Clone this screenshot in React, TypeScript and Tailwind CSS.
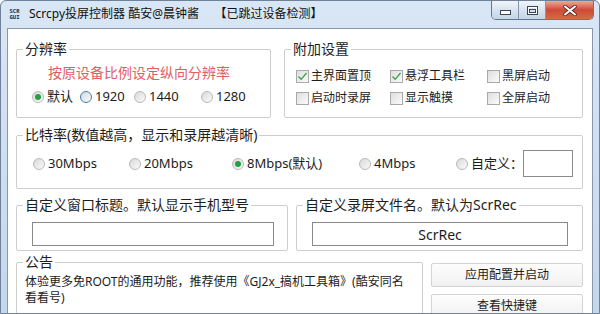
import React from "react";

function Radio({ label, checked, hover, className }: { label: string; checked?: boolean; hover?: boolean; className?: string }) {
  return (
    <div className={`flex items-center gap-[3px] ${className ?? ""}`}>
      <span
        className={`w-[12px] h-[12px] shrink-0 rounded-full border flex items-center justify-center bg-linear-to-br from-[#d9d9d9] to-[#fbfbfb] ${
          hover ? "border-[#3d7fb5]" : "border-[#b9b9b9]"
        }`}
      >
        {checked && <span className="w-[6px] h-[6px] rounded-full bg-[#24a043]" />}
      </span>
      <span className="whitespace-nowrap">{label}</span>
    </div>
  );
}

function Check({ label, checked, className }: { label: string; checked?: boolean; className?: string }) {
  return (
    <div className={`flex items-center gap-[2px] ${className ?? ""}`}>
      <span className="w-[13px] h-[13px] shrink-0 border border-[#a9a9a9] bg-linear-to-br from-[#dedede] to-[#fbfbfb] flex items-center justify-center">
        {checked && (
          <svg width="11" height="11" viewBox="0 0 11 11">
            <path d="M1.5 5.5 L4.2 8.3 L9.5 2" fill="none" stroke="#3aa04a" strokeWidth="1.3" />
          </svg>
        )}
      </span>
      <span className="whitespace-nowrap">{label}</span>
    </div>
  );
}

function Legend({ children }: { children: React.ReactNode }) {
  return <legend className="ml-[6px] px-[2px] text-[14px] leading-[18px] text-[#1e1e1e]">{children}</legend>;
}

export default function App() {
  return (
    <div className="w-[600px] h-[314px] overflow-hidden flex flex-col border border-[#6f8299] rounded-t-[6px] bg-linear-to-b from-[#d9e6f5] to-[#c3d7ed] text-[#1c1c1c] font-['Noto_Sans','Noto_Sans_CJK_SC',sans-serif]">
      {/* title bar */}
      <div className="h-[27px] shrink-0 flex">
        <div className="flex items-center pl-[7px] h-[22px] mt-[2px]">
          <div className="w-[13px] flex flex-col items-center font-['DejaVu_Sans_Mono',monospace] font-bold text-[5.5px] leading-[6px] text-[#1b2a3a]">
            <span>SCR</span>
            <span>GUI</span>
          </div>
          <span className="ml-[8px] text-[12px] leading-[16px] whitespace-pre text-[#111]">
            Scrcpy投屏控制器 酷安@晨钟酱     【已跳过设备检测】
          </span>
        </div>
        <div className="ml-auto mr-[5px] self-start flex h-[19px] rounded-b-[5px] border border-t-0 border-[#64778e] overflow-hidden">
          <div className="w-[27px] border-r border-[#8596ab] bg-linear-to-b from-[#f1f5fa] via-[#d9e3ef] to-[#c5d4e6] flex items-end justify-center pb-[4px]">
            <svg width="11" height="5" viewBox="0 0 11 5">
              <rect x="0.5" y="0.5" width="10" height="4" fill="#fff" stroke="#3b4656" />
            </svg>
          </div>
          <div className="w-[27px] border-r border-[#8596ab] bg-linear-to-b from-[#f1f5fa] via-[#d9e3ef] to-[#c5d4e6] flex items-center justify-center">
            <svg width="11" height="9" viewBox="0 0 11 9">
              <rect x="0.5" y="0.5" width="10" height="8" fill="none" stroke="#3b4656" />
              <rect x="1.5" y="1.5" width="8" height="6" fill="none" stroke="#fff" />
              <rect x="2.5" y="3.5" width="6" height="3" fill="none" stroke="#3b4656" />
            </svg>
          </div>
          <div className="w-[47px] bg-linear-to-b from-[#eaa999] via-[#cb4a33] to-[#d66b4b] flex items-center justify-center">
            <svg width="14" height="11" viewBox="0 0 14 11">
              <path d="M2 1.5 L12 9.5 M12 1.5 L2 9.5" stroke="#5a2a22" strokeWidth="3.6" strokeLinecap="round" />
              <path d="M2 1.5 L12 9.5 M12 1.5 L2 9.5" stroke="#fff" strokeWidth="2" strokeLinecap="round" />
            </svg>
          </div>
        </div>
      </div>

      {/* client area */}
      <div className="flex-1 mx-[6px] border border-[#8797ac] bg-white pl-[8px] pr-[9px] pt-[11px] flex flex-col">
        {/* row 1 */}
        <div className="flex gap-[13px]">
          <fieldset className="w-[255px] h-[78px] border border-[#cdcdcd] rounded-[2px]">
            <Legend>分辨率</Legend>
            <div className="pl-[15px]">
              <div className="mt-[5px] pl-[16px] text-[14px] leading-[20px] text-[#e0605f]">按原设备比例设定纵向分辨率</div>
              <div className="mt-[4px] h-[20px] flex text-[13px]">
                <Radio label="默认" checked className="w-[48px]" />
                <Radio label="1920" hover className="w-[54px]" />
                <Radio label="1440" className="w-[67px]" />
                <Radio label="1280" />
              </div>
            </div>
          </fieldset>
          <fieldset className="flex-1 h-[78px] border border-[#cdcdcd] rounded-[2px]">
            <Legend>附加设置</Legend>
            <div className="pl-[11px]">
              <div className="mt-[8px] h-[20px] flex text-[12px]">
                <Check label="主界面置顶" checked className="w-[94px]" />
                <Check label="悬浮工具栏" checked className="w-[97px]" />
                <Check label="黑屏启动" />
              </div>
              <div className="mt-[2px] h-[20px] flex text-[12px]">
                <Check label="启动时录屏" className="w-[94px]" />
                <Check label="显示触摸" className="w-[97px]" />
                <Check label="全屏启动" />
              </div>
            </div>
          </fieldset>
        </div>

        {/* row 2 */}
        <fieldset className="mt-[8px] h-[63px] border border-[#cdcdcd] rounded-[2px]">
          <Legend>比特率(数值越高，显示和录屏越清晰)</Legend>
          <div className="pl-[16px] mt-[6px] h-[27px] flex items-center text-[13px]">
            <Radio label="30Mbps" className="w-[96px]" />
            <Radio label="20Mbps" className="w-[103px]" />
            <Radio label="8Mbps(默认)" checked className="w-[127px]" />
            <Radio label="4Mbps" className="w-[97px]" />
            <Radio label="自定义：" />
            <div className="w-[50px] h-[27px] border border-[#8a8a8a] bg-white" />
          </div>
        </fieldset>

        {/* row 3 */}
        <div className="mt-[7px] flex gap-[8px]">
          <fieldset className="w-[272px] h-[55px] border border-[#cdcdcd] rounded-[2px]">
            <Legend>自定义窗口标题。默认显示手机型号</Legend>
            <div className="pl-[15px] pt-[8px]">
              <div className="w-[242px] h-[24px] border border-[#8a8a8a] bg-white" />
            </div>
          </fieldset>
          <fieldset className="flex-1 h-[55px] border border-[#cdcdcd] rounded-[2px]">
            <Legend>自定义录屏文件名。默认为ScrRec</Legend>
            <div className="pl-[15px] pt-[8px]">
              <div className="w-[256px] h-[24px] border border-[#8a8a8a] bg-white flex items-center justify-center text-[14px]">
                ScrRec
              </div>
            </div>
          </fieldset>
        </div>

        {/* row 4 */}
        <div className="mt-[2px] flex gap-[8px]">
          <fieldset className="w-[407px] h-[70px] border border-[#cdcdcd] rounded-[2px]">
            <Legend>公告</Legend>
            <p className="pl-[8px] mt-[3px] text-[12px] leading-[16px]">
              体验更多免ROOT的通用功能，推荐使用《GJ2x_搞机工具箱》(酷安同名
              <br />
              看看号)
            </p>
          </fieldset>
          <div className="flex-1 pt-[10px] flex flex-col gap-[7px] text-[12px]">
            <button className="h-[24px] border border-[#d3d3d3] rounded-[2px] bg-linear-to-b from-[#fdfdfd] to-[#f1f1f1]">应用配置并启动</button>
            <button className="h-[24px] border border-[#d3d3d3] rounded-[2px] bg-linear-to-b from-[#fdfdfd] to-[#f1f1f1]">查看快捷键</button>
          </div>
        </div>
      </div>
    </div>
  );
}
